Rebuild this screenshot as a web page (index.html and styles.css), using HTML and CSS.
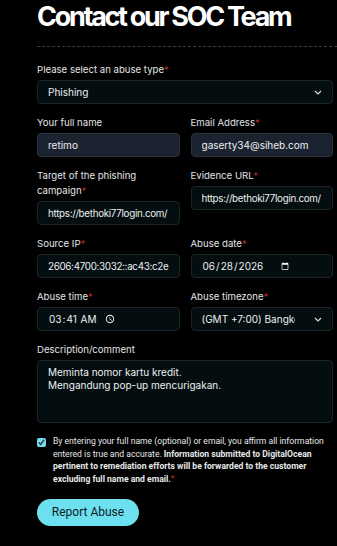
FILE: index.html
```html
<!DOCTYPE html>
<html lang="en">

<head>
    <meta charset="UTF-8">
    <meta name="viewport" content="width=device-width, initial-scale=1.0">
    <title>Contact our SOC Team</title>
    <link rel="stylesheet" href="styles.css">
</head>

<body>
    <div class="page">
        <h1 class="title">Contact our SOC Team</h1>
        <div class="divider"></div>

        <form class="abuse-form" onsubmit="return false">
            <div class="field">
                <label>Please select an abuse type<span class="req">*</span></label>
                <div class="select-wrap">
                    <select class="control">
                        <option>Phishing</option>
                        <option>Spam</option>
                        <option>Malware</option>
                    </select>
                    <svg class="chevron" width="8" height="5" viewBox="0 0 8 5"><path d="M1 1l3 3 3-3" fill="none" stroke="#d9dde0" stroke-width="1.2"/></svg>
                </div>
            </div>

            <div class="row">
                <div class="field">
                    <label>Your full name</label>
                    <input class="control filled" type="text" value="retimo">
                </div>
                <div class="field">
                    <label>Email Address<span class="req">*</span></label>
                    <input class="control filled" type="email" value="gaserty34@siheb.com">
                </div>
            </div>

            <div class="row">
                <div class="field">
                    <label class="narrow">Target of the phishing campaign<span class="req">*</span></label>
                    <input class="control tight" type="text" value="https://bethoki77login.com/">
                </div>
                <div class="field">
                    <label>Evidence URL<span class="req">*</span></label>
                    <input class="control tight" type="text" value="https://bethoki77login.com/">
                </div>
            </div>

            <div class="row">
                <div class="field">
                    <label>Source IP<span class="req">*</span></label>
                    <input class="control tight" type="text" value="2606:4700:3032::ac43:c2e">
                </div>
                <div class="field">
                    <label>Abuse date<span class="req">*</span></label>
                    <input class="control picker date" type="date" value="2026-06-28">
                </div>
            </div>

            <div class="row">
                <div class="field">
                    <label>Abuse time<span class="req">*</span></label>
                    <input class="control picker" type="time" value="03:41">
                </div>
                <div class="field">
                    <label>Abuse timezone<span class="req">*</span></label>
                    <div class="select-wrap">
                        <select class="control">
                            <option>(GMT +7:00) Bangkok, Hanoi, Jakarta</option>
                        </select>
                        <svg class="chevron" width="8" height="5" viewBox="0 0 8 5"><path d="M1 1l3 3 3-3" fill="none" stroke="#d9dde0" stroke-width="1.2"/></svg>
                    </div>
                </div>
            </div>

            <div class="field spaced">
                <label>Description/comment</label>
                <textarea class="control area">Meminta nomor kartu kredit.
Mengandung pop-up mencurigakan.</textarea>
            </div>

            <div class="consent">
                <input class="check" type="checkbox" checked>
                <p>By entering your full name (optional) or email, you affirm all information entered is true and accurate. <strong>Information submitted to DigitalOcean pertinent to remediation efforts will be forwarded to the customer excluding full name and email.</strong><span class="req">*</span></p>
            </div>

            <button class="submit" type="submit">Report Abuse</button>
        </form>
    </div>
</body>

</html>
```

FILE: styles.css
```css
* {
    margin: 0;
    padding: 0;
    box-sizing: border-box;
}

body {
    font-family: 'Inter', 'Roboto', sans-serif;
    background-color: #000;
    color: #e8eaeb;
    overflow: hidden;
}

.page {
    padding: 0 4px 0 37px;
}

.title {
    font-size: 27px;
    font-weight: 700;
    letter-spacing: -2.3px;
    line-height: 33px;
    color: #fff;
}

.divider {
    border-top: 1px dashed #3a3d40;
    margin: 13px -4px 0 0;
}

.abuse-form {
    display: flex;
    flex-direction: column;
    padding-top: 15px;
}

.row {
    display: grid;
    grid-template-columns: 1fr 1fr;
    align-items: start;
    column-gap: 11px;
    margin-top: 11px;
}

.field {
    display: flex;
    flex-direction: column;
}

.field label {
    font-size: 9.6px;
    line-height: 15px;
    color: #e3e5e6;
    margin-bottom: 3px;
}

.field label.narrow {
    padding-right: 20px;
}

.req {
    color: #b0322a;
}

.control {
    font-family: 'Inter', 'Roboto', sans-serif;
    font-size: 10px;
    color: #eef0f1;
    background-color: #040e10;
    border: 1px solid #1b2527;
    border-radius: 4px;
    height: 24px;
    padding: 0 10px;
    width: 100%;
    outline: none;
    color-scheme: dark;
}

.control.filled {
    background-color: #1c2330;
    border-color: #2a313c;
}

.control.tight {
    font-size: 9.8px;
    letter-spacing: -0.3px;
}

.picker {
    display: flex;
}

.picker::-webkit-datetime-edit {
    flex: 0 0 auto;
    margin-right: 2px;
}

.picker::-webkit-calendar-picker-indicator {
    margin: 0;
    width: 10px;
    height: 10px;
}

.date::-webkit-calendar-picker-indicator {
    width: 8px;
    height: 8px;
    margin-left: -4px;
}

.select-wrap {
    position: relative;
}

.select-wrap select {
    appearance: none;
    padding-right: 37px;
}

.chevron {
    position: absolute;
    right: 11px;
    top: 10px;
    pointer-events: none;
}

.spaced {
    margin-top: 11px;
}

.area {
    height: 63px;
    padding: 5px 10px;
    line-height: 13px;
    resize: none;
}

.consent {
    display: flex;
    gap: 7px;
    margin-top: 12px;
}

.check {
    width: 9px;
    height: 9px;
    margin-top: 3px;
    flex-shrink: 0;
    accent-color: #6ee0ef;
}

.consent p {
    font-family: 'Roboto', sans-serif;
    font-size: 8.6px;
    line-height: 12.7px;
    color: #e6e8e9;
}

.consent strong {
    font-weight: 700;
}

.submit {
    align-self: flex-start;
    margin-top: 13px;
    width: 102px;
    height: 27px;
    border: none;
    border-radius: 14px;
    background-color: #6de0ef;
    color: #0b1a1f;
    font-family: 'Roboto', sans-serif;
    font-size: 12px;
}
```
